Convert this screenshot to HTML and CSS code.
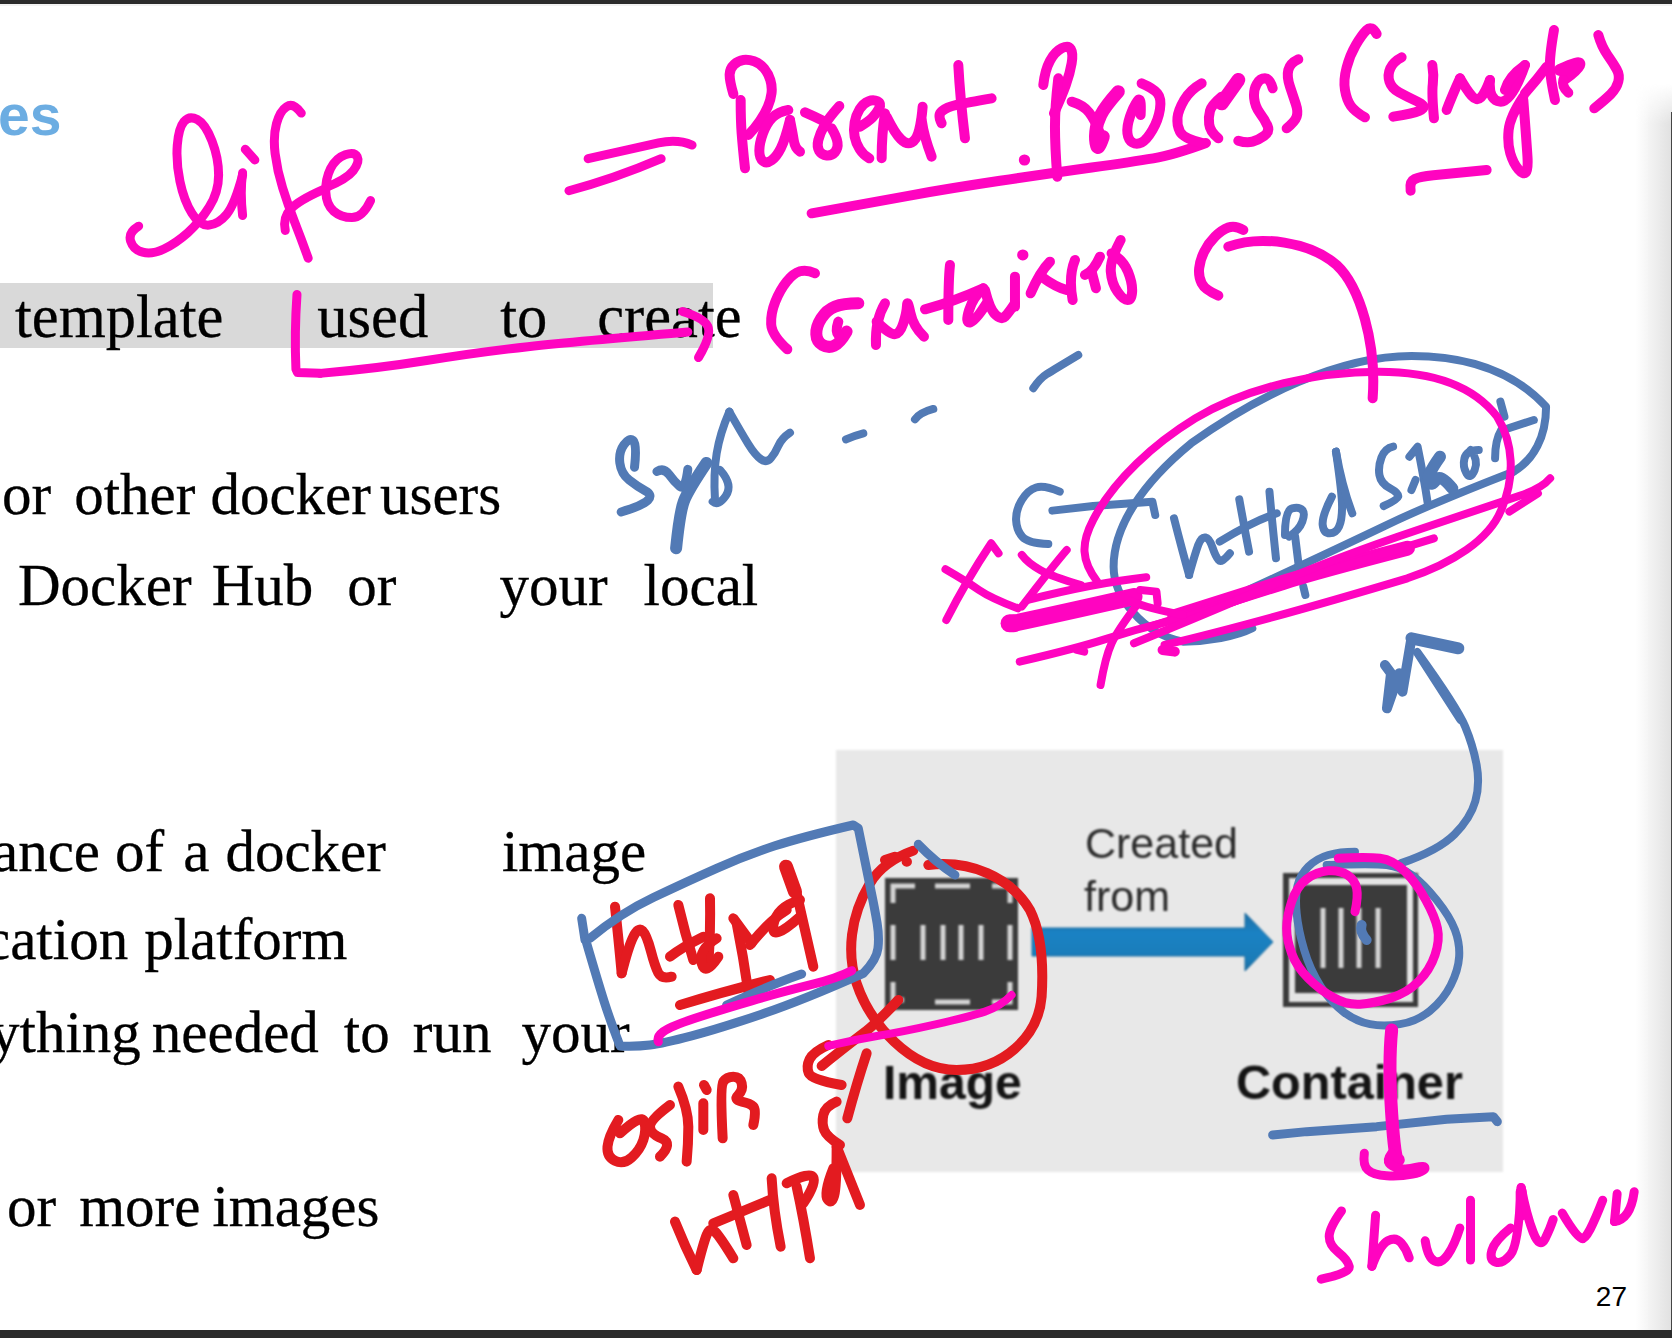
FILE: index.html
```html
<!DOCTYPE html>
<html lang="en">
<head>
<meta charset="utf-8">
<title>Slide 27</title>
<link rel="stylesheet" href="styles.css">
</head>
<body>
<div class="page">
  <div class="top-bar"></div>
  <main class="slide">
    <section class="copy">
      <h1 class="heading">es</h1>
      <p class="line band l1"><span class="s15">template</span><span class="s94">used</span><span class="s72">to</span><span class="s50">create</span></p>
      <p class="line l2"><span class="s2">or</span><span class="s23">other</span><span class="s15">docker</span><span class="s9">users</span></p>
      <p class="line l3"><span class="s18">Docker</span><span class="s20">Hub</span><span class="s34">or</span><span class="s103">your</span><span class="s36">local</span></p>
      <p class="line l4"><span class="sn8">ance</span><span class="s15">of</span><span class="s19">a</span><span class="s16">docker</span><span class="s116">image</span></p>
      <p class="line l5"><span class="sn16">cation</span><span class="s16">platform</span></p>
      <p class="line l6"><span class="sn10">ything</span><span class="s11">needed</span><span class="s25">to</span><span class="s23">run</span><span class="s30">your</span></p>
      <p class="line l7"><span class="s7">or</span><span class="s23">more</span><span class="s12">images</span></p>
    </section>
    <aside class="side">
      <svg class="figure" viewBox="0 0 667 422" width="667" height="422" role="img" aria-label="Container created from image">
        <defs>
          <linearGradient id="arrowFill" x1="0" y1="0" x2="0" y2="1">
            <stop offset="0" stop-color="#1d6ea5"/>
            <stop offset=".35" stop-color="#1a82c4"/>
            <stop offset=".8" stop-color="#1a7cb8"/>
            <stop offset="1" stop-color="#1e6b9e"/>
          </linearGradient>
        </defs>
        <rect width="667" height="422" fill="#e8e8e8"/>
        <text class="cap" x="249" y="108">Created</text>
        <text class="cap" x="248" y="161">from</text>
        <text class="label" x="47" y="349">Image</text>
        <text class="label wide" x="400" y="349">Container</text>
        <rect x="49" y="128" width="133" height="132" fill="#3b3b3b"/>
        <g class="light">
          <path d="M57 153V136H79M99 136H134M156 136H174V153M57 175V210M174 175V210M57 232V250H68M99 252H134M156 252H174V232"/>
          <path d="M87 175V210M107 175V210M125 175V210M145 175V210"/>
        </g>
        <rect x="447" y="123" width="135" height="134" fill="#3b3b3b"/>
        <rect x="453" y="128" width="124" height="124" fill="#e4e4e4"/>
        <rect x="459" y="135" width="112" height="108" fill="#3b3b3b"/>
        <g class="light">
          <path d="M487 158V218M505 158V218M523 158V218M542 158V218"/>
        </g>
        <path class="arrow" fill="url(#arrowFill)" d="M196 178H409V163L437 192L409 221V206H196Z"/>
      </svg>
      <div class="page-number">27</div>
    </aside>
  </main>
  <div class="bottom-bar"></div>

  <svg class="ink" viewBox="0 0 1672 1338" width="1672" height="1338" aria-hidden="true">
    <!-- red -->
    <g class="red w10" transform="translate(570,810) scale(.3333)">
      <path d="M135 290Q145 380 155 490"/>
      <path d="M155 490Q175 410 190 380T217.5 362.5T242.5 422.5T265 489T305 500"/>
      <path d="M325 285Q345 370 370 450"/>
      <path d="M300 440Q330 415 400 380"/>
      <path d="M420 265Q422 360 415 465"/>
      <path d="M440 385Q385 420 395 460T445 440"/>
      <path d="M500 340Q520 440 535 545"/>
      <path d="M490 325L545 400"/>
      <path d="M540 405Q600 330 650 300"/>
      <path d="M690 270Q620 290 610 345T690 320"/>
      <path d="M680 250Q700 340 730 470"/>
      <path class="w14" d="M648 170L675 245"/>
      <path d="M330 585Q460 545 600 510"/>
      <path d="M1075 165C1200 150 1320 200 1380 300C1420 380 1420 480 1415 560C1405 680 1300 780 1160 780C1020 780 900 640 860 520C830 430 840 320 900 220C930 170 980 140 1030 122"/>
      <path d="M945 150L975 140M1010 155H1011"/>
      <path d="M985 570Q920 640 880 670T755 768"/>
      <path d="M775 705Q730 725 719 747.5T716.5 790T815 825"/>
      <path d="M890 730Q860 820 832 925"/>
      <path d="M800 875Q765 890 760 915T762.5 960T810 1005"/>
      <path d="M145 930Q115 980 112.5 1010T135 1052.5T185 1042.5T220 990T222.5 935T150 970"/>
      <path d="M300 885Q240 930 240 950T275 985T270 1040"/>
      <path d="M325 830Q355 900 355 950T350 1055"/>
      <path d="M402 825L410 840M400 880L400 960"/>
      <path d="M458 985Q450 830 460 815T490 800T515 820T505 855T515 875T550 890T550 945"/>
      <path d="M315 1235Q345 1310 380 1380"/>
      <path d="M380 1380Q400 1300 410 1275T435 1265T490 1345"/>
      <path d="M490 1155Q510 1230 530 1305"/>
      <path d="M430 1240L600 1170"/>
      <path d="M605 1105Q610 1200 632 1310"/>
      <path d="M680 1130Q700 1220 720 1345"/>
      <path d="M650 1120Q720 1085 730 1102.5T700 1180"/>
      <path d="M790 1075Q760 1150 772.5 1167.5T792.5 1157.5T800 1010"/>
      <path d="M800 1010L870 1185"/>
    </g>
    <!-- blue -->
    <g class="blue w8" transform="translate(700,20) scale(.3333)">
      <path d="M1000 1105Q1020 1075 1040 1062.5T1135 1005"/>
      <path d="M645 1198Q660 1178 700 1167"/>
      <path d="M438 1258Q460 1248 490 1240"/>
      <path d="M45 1440Q40 1360 50 1300T88 1175"/>
      <path d="M88 1175Q125 1240 145 1272.5T182.5 1317.5T212.5 1315T235 1277.5T270 1238"/>
      <path d="M60 1350Q100 1395 77.5 1427.5T38 1445"/>
    </g>
    <g class="blue w9" transform="scale(.5332,.4267)">
      <path d="M1190 1095Q1195 1040 1187.5 1032.5T1170 1042.5T1162.5 1085T1180 1125T1210 1150T1215 1172.5T1165 1200"/>
      <path d="M1232 1105Q1245 1095 1255 1112.5T1275 1140T1290 1100"/>
      <path class="w12" d="M1325 1085Q1290 1150 1282.5 1175T1268 1285"/>
    </g>
    <g class="blue w8" transform="translate(930,340) scale(.408,.3333)">
      <path d="M1430 395C1480 360 1510 290 1510 200C1450 120 1350 48 1180 48C1000 48 800 170 640 310C520 430 450 560 450 680C450 770 520 880 620 905C680 905 750 890 790 865"/>
      <path d="M1430 395Q1230 490 1115 557.5T780 750"/>
      <path d="M318 455Q280 435 260 442.5T225 480T211 540T226 590T290 612"/>
      <path d="M300 512L400 498 545 485 552 525"/>
      <path d="M598 535Q620 640 635 705"/>
      <path d="M635 705Q650 640 657.5 615T675 592.5T692.5 622.5T707.5 660T735 640"/>
      <path d="M758 478Q770 560 782 635"/>
      <path d="M832 455Q838 540 848 655"/>
      <path d="M710 605Q790 545 850 520"/>
      <path d="M870 585Q870 510 887.5 505T912.5 510T912.5 545T880 590"/>
      <path d="M895 590L905 690"/>
      <path d="M985 470Q960 530 962.5 555T980 580T1002.5 560T1010 500T995 335"/>
      <path d="M995 335Q1010 440 1035 520"/>
      <path d="M1135 320Q1115 325 1106.5 352.5T1101.5 405T1127.5 445T1147.5 470T1112 498"/>
      <path d="M1175 350L1195 320Q1210 410 1220 490"/>
      <path class="w12" d="M1250 350Q1215 410 1222.5 425T1240 420T1280 445"/>
      <path d="M1190 420L1180 450"/>
      <path d="M1345 330Q1315 330 1310 355T1315 400T1335 390T1325 330"/>
      <path d="M1385 355Q1385 300 1400 270"/>
      <path d="M1405 270L1480 240"/>
      <path d="M1398 185L1408 230"/>
      <path d="M915 740L920 765"/>
      <path class="w10" d="M1115 975L1130 1000 1120 1105 1150 1000 1158 1055 1180 895"/>
      <path class="w12" d="M1180 895L1295 925"/>
      <path d="M1195 940L1300 1140"/>
    </g>
    <g class="blue w8" transform="translate(836,669) scale(.5332,.4267)">
      <path d="M1090 -40Q1165 90 1180 135T1201.5 225T1199 310T1160 387.5T1060 455"/>
    </g>
    <g class="blue w8" transform="translate(1260,830) scale(.3333)">
      <path d="M285 65Q240 65 205 75T145 110T112.5 167.5T110 250T132.5 360T182.5 470T252.5 547.5T330 582.5T420 582.5T510 542.5T572.5 465T597.5 380T585 300T530 210T455 135T380 105T200 105"/>
      <path class="w10" d="M305 285Q298 305 320 330"/>
      <path class="w9" d="M38 915L140 905 350 890 560 868 700 860L712 875"/>
    </g>
    <g class="blue w9" transform="translate(570,810) scale(.3333)">
      <path d="M35 325L45 390"/>
      <path d="M60 385Q150 310 250 262.5T440 175T615 107.5T850 45L865 55Q890 180 902.5 240T921.5 340T924 415T880 490Q700 570 575 612.5T365 677.5T240 705T150 708Q120 630 102.5 575T50 400"/>
      <path d="M470 585Q600 525 695 492"/>
      <path d="M1045 103Q1095 155 1155 195"/>
    </g>
    <!-- pink -->
    <g class="pink w9" transform="scale(.5332,.4267)">
      <path d="M260 530Q240 545 245 565T267.5 591T307.5 583.5T352.5 545T392.5 485T410 410T397.5 330T370 280T345 285T332.5 340T337.5 425T360 500T392.5 527.5T425 502.5T455 410"/>
      <path d="M455 405Q450 450 455 505"/>
      <path d="M460 350L478 375"/>
      <path d="M565 265Q550 240 537.5 250T518.5 290T516 360T530 440T552.5 520T578 605"/>
      <path d="M605 445Q560 470 545 490T535 540"/>
      <path d="M610 440Q650 420 662.5 400T670 367.5T647.5 362.5T620 395T611 450T626 495T660 510T695 470"/>
      <path d="M1103 372Q1200 345 1235 335T1298 340"/>
      <path d="M1067 447Q1150 420 1240 372"/>
      <path d="M557 690Q552 780 555 865L558 873 600 875"/>
      <path d="M600 875Q700 865 800 845T990 812.5T1290 778"/>
      <path d="M1280 730Q1320 745 1327.5 765T1310 838"/>
    </g>
    <g class="pink w10" transform="translate(700,20) scale(.3333)">
      <path d="M100 222Q88 180 89 162.5T102.5 133.5T130 120T162.5 124T192.5 145T211 180T214.5 220T203.5 260T180 302.5T145 345"/>
      <path d="M122 240Q122 300 125 340T135 445"/>
      <path d="M265 270Q235 275 217.5 292.5T189 340T178 392.5T189 423.5T215 421T242.5 385T270 300"/>
      <path d="M270 300Q278 340 281.5 362.5T300 395"/>
      <path d="M315 277Q345 290 375 305"/>
      <path d="M418 258Q385 295 372.5 317.5T355 360T357.5 392.5T380 406.5T405 396.5T412.5 367.5T395 325"/>
      <path d="M480 320Q505 305 517.5 292.5T537.5 265T532.5 244T505 244T479 267.5T464 307.5T464 350T479 387.5T508 415"/>
      <path d="M555 280Q545 340 545 415"/>
      <path d="M560 290Q585 340 602.5 357.5T635 367.5T657.5 330T668 260"/>
      <path d="M665 300Q672 350 695 410"/>
      <path d="M775 135Q780 230 795 355"/>
      <path d="M725 310Q712 285 726 273.5T770 255T875 235"/>
      <path d="M1030 195Q1035 150 1050 122.5T1085 85T1112.5 87.5T1115 130T1097.5 195T1062 280"/>
      <path d="M1075 175Q1065 260 1065 320T1072 470"/>
      <path d="M1115 245Q1150 255 1167.5 277.5T1200 340"/>
      <path class="w13" d="M1255 215Q1215 260 1202.5 285T1187.5 335T1190 377.5T1210 350"/>
      <path class="w11" d="M973 420H974"/>
      <path d="M1325 190Q1360 205 1372.5 220T1380 267.5T1357.5 330T1325 367.5T1297.5 367.5T1282.5 340T1290 290T1312.5 242.5T1322 285"/>
      <path d="M335 580Q500 550 625 527.5T900 482.5T1175 442.5T1360 415T1518 369"/>
      <path d="M345 760Q320 748 300 754T260 785T226 845T213.5 912.5T262 988"/>
      <path class="w12" d="M475 850Q430 850 405 860T364 895T349 942.5T367.5 975T402.5 977.5T440 935"/>
      <path d="M415 905Q405 935 415 945"/>
      <path d="M528 975Q525 900 555 850"/>
      <path d="M530 905Q570 945 585 942.5T610 910T621 857.5T631 877.5T672 950"/>
      <path d="M750 735Q745 780 745 900"/>
      <path d="M675 868Q760 845 850 805"/>
      <path d="M850 805Q820 830 807.5 870T810 907.5T860 850"/>
      <path d="M855 810Q870 870 887.5 885T915 890T945 850"/>
      <path d="M945 770L945 860"/>
      <path class="w11" d="M968 705H969"/>
      <path d="M1050 725Q1020 755 992 820"/>
      <path d="M1025 770Q1065 800 1100 810"/>
      <path d="M1125 720Q1105 770 1118 840"/>
      <path d="M1155 765Q1180 755 1200 710"/>
      <path d="M1175 755L1188 805"/>
      <path d="M1262 660Q1230 720 1232.5 755T1252.5 815T1282.5 840T1296.5 815T1284 755T1235 700"/>
    </g>
    <g class="pink w10" transform="translate(1180,0) scale(.3333)">
      <path d="M65 250Q30 270 12.5 300T-7.5 352.5T0 395T70 430"/>
      <path class="w14" d="M175 240L125 310"/>
      <path d="M125 290Q95 315 90 332.5T87.5 372.5T115 415"/>
      <path d="M278 265Q270 235 255 235T230 252.5T222.5 295T240 340T262.5 377.5T252.5 407.5T217.5 425T175 422"/>
      <path d="M355 178Q330 190 325 210T330 260T347.5 312.5T350 350T320 385"/>
      <path d="M590 102Q575 75 560 90T527.5 135T500 202.5T495 270T512.5 317.5T555 352"/>
      <path d="M665 172Q640 185 631 205T628.5 245T657.5 277.5T702.5 300T730 317.5T717.5 332.5T640 350"/>
      <path d="M757 195Q762 225 758.5 252.5T762 355"/>
      <path d="M800 330Q815 290 840 235"/>
      <path d="M840 235Q860 270 875 287.5T902.5 292.5T930 240"/>
      <path d="M930 240Q925 300 960 305T1035 195"/>
      <path d="M1035 195Q985 230 975 270"/>
      <path d="M1030 290Q990 350 986 390T991 460T1015 507.5T1037.5 517.5T1042.5 470T1030 300"/>
      <path d="M1122 90Q1108 170 1110 205T1125 300"/>
      <path d="M1100 200Q1070 240 1035 280"/>
      <path class="w12" d="M1140 210Q1205 180 1197.5 195T1155 235"/>
      <path d="M1150 240Q1145 260 1165 278"/>
      <path d="M1255 105Q1265 140 1282.5 165T1310 207.5T1315 245T1292.5 282.5T1243 325"/>
      <path d="M692 572Q688 545 704 537.5T760 526T920 510"/>
      <path d="M190 690Q165 675 145 682.5T105 710T72.5 755T57.5 805T65 850T115 887"/>
      <path d="M145 740C240 705 390 725 470 795C540 860 590 1030 578 1195"/>
    </g>
    <g class="pink w8" transform="translate(930,340) scale(.408,.3333)">
      <path d="M410 725C370 660 370 610 400 540C450 420 550 310 650 235C780 140 950 95 1100 95C1250 95 1340 150 1390 230C1430 310 1435 410 1400 510C1370 600 1280 670 1170 715C1020 770 800 850 575 915"/>
      <path class="w17" d="M205 850Q320 820 500 770"/>
      <path class="w18" d="M195 850L205 850"/>
      <path class="w15" d="M600 830Q780 760 865 727.5T1170 625"/>
      <path d="M540 860L1000 680"/>
      <path d="M220 965Q360 925 430 897.5T575 847.5T775 772.5T1235 595"/>
      <path d="M500 910Q700 810 850 730T1195 570T1445 467.5T1520 415"/>
      <path d="M1420 515L1490 460"/>
      <path class="w10" d="M570 930L600 935"/>
      <path d="M38 688Q90 725 120 750T215 805"/>
      <path d="M40 840Q90 720 150 610L168 640"/>
      <path d="M225 645Q240 670 270 690T370 735"/>
      <path d="M335 630Q300 680 225 800"/>
      <path d="M240 780Q400 730 530 712"/>
      <path d="M515 750L555 755 558 790"/>
      <path d="M418 1035Q430 950 445 910T510 790"/>
      <path d="M360 930L378 935"/>
      <path d="M470 770Q510 800 620 825"/>
    </g>
    <g class="pink w9" transform="translate(570,810) scale(.3333)">
      <path d="M265 695Q260 680 280 665T375 625T545 572.5T720 525T845 482"/>
      <path class="w8" d="M775 708Q850 690 925 677.5T1100 642.5T1245 605T1325 555"/>
    </g>
    <g class="pink w9" transform="translate(1260,830) scale(.3333)">
      <path d="M235 85Q320 80 360 85T435 125T497.5 210T532.5 295T525 375T475 455T390 505T300 522.5T220 502.5T145 445T95 370T80 295T95 215T140 147.5T205 122.5T262.5 135T290 175T285 245"/>
      <path class="w13" d="M395 600Q385 700 395 850T415 990"/>
      <path d="M313 970Q308 1005 324 1020T380 1037.5T457.5 1032.5T495 1015T467.5 1012.5T417.5 1015T387.5 1000T395 970"/>
    </g>
    <g class="pink w9" transform="translate(836,669) scale(.5332,.4267)">
      <path d="M948 1270Q925 1310 925 1330T942.5 1367.5T962.5 1400T910 1430"/>
      <path d="M1012 1280L1005 1400"/>
      <path d="M1005 1400Q1020 1350 1035 1340T1060 1345T1075 1380"/>
      <path d="M1105 1340Q1110 1380 1122.5 1387.5T1147.5 1372.5T1170 1310"/>
      <path d="M1190 1245L1190 1385"/>
      <path d="M1265 1310Q1235 1340 1230 1362.5T1237.5 1390T1265 1372.5T1285 1215"/>
      <path class="w11" d="M1285 1225L1285 1280"/>
      <path d="M1285 1215Q1295 1280 1307.5 1320T1330 1335T1345 1290"/>
      <path d="M1362 1275Q1390 1335 1400 1335T1438 1245"/>
      <path d="M1465 1230L1460 1295"/>
      <path d="M1460 1295Q1490 1290 1497 1225"/>
    </g>
  </svg>
</div>
</body>
</html>
```
FILE: styles.css
```css
* { box-sizing: border-box; }
html, body { margin: 0; padding: 0; background: #fff; }
.page { position: relative; width: 1672px; height: 1338px; overflow: hidden; display: flex; flex-direction: column; background: #fff; }
.top-bar { height: 6px; flex: none; background: #f2f2f2; border-top: 4px solid #2b2b2b; }
.bottom-bar { height: 8px; flex: none; background: #2b2b2b; }
.slide { position: relative; flex: 1; display: grid; grid-template-columns: 836px 836px; background: #fff; }
.slide::before { content: ""; position: absolute; z-index: 1; right: 0; top: 106px; bottom: 0; width: 1px; background: #444; }
.slide::after { content: ""; position: absolute; right: 0; top: 78px; bottom: 0; width: 36px; background: linear-gradient(to right, rgba(225,225,225,0), #e0e0e0); -webkit-mask-image: linear-gradient(to bottom, transparent, #000 40px); mask-image: linear-gradient(to bottom, transparent, #000 40px); }
.copy { font-family: "Liberation Serif", "Times New Roman", serif; font-size: 59px; color: #000; -webkit-text-stroke: .3px #000; }
.heading { margin: 79px 0 0 -2px; font: bold 57px/60px "Liberation Sans", Arial, sans-serif; color: #6cade2; -webkit-text-stroke: 0; }
.line { display: flex; margin: 0; height: 60px; line-height: 60px; white-space: pre; position: relative; }
.band { width: 713px; height: 65px; line-height: 67px; font-size: 60.5px; background: #d9d9d9; margin-top: 138px; }
.l2 { margin-top: 116px; }
.l3 { margin-top: 31px; }
.l4 { margin-top: 206px; }
.l5 { margin-top: 28px; }
.l6 { margin-top: 33px; }
.l7 { margin-top: 114px; }
.sn16 { margin-left: -16px; }
.sn10 { margin-left: -10px; }
.sn8 { margin-left: -8px; }
.s2 { margin-left: 2px; }
.s7 { margin-left: 7px; }
.s9 { margin-left: 9px; }
.s11 { margin-left: 11px; }
.s12 { margin-left: 12px; }
.s15 { margin-left: 15px; }
.s16 { margin-left: 16px; }
.s18 { margin-left: 18px; }
.s19 { margin-left: 19px; }
.s20 { margin-left: 20px; }
.s23 { margin-left: 23px; }
.s25 { margin-left: 25px; }
.s30 { margin-left: 30px; }
.s34 { margin-left: 34px; }
.s36 { margin-left: 36px; }
.s50 { margin-left: 50px; }
.s72 { margin-left: 72px; }
.s94 { margin-left: 94px; }
.s103 { margin-left: 103px; }
.s116 { margin-left: 116px; }
.side { padding-top: 744px; }
.figure { display: block; filter: blur(.8px); }
.cap { font: 43px "Liberation Sans", Arial, sans-serif; fill: #2b2b2b; }
.label { font: bold 48px "Liberation Sans", Arial, sans-serif; fill: #141414; }
.wide { font-size: 48.6px; }
.light path { fill: none; stroke: #d4d4d4; stroke-width: 5; }
.arrow { stroke: #1d6c9f; stroke-width: 1; }
.page-number { margin-top: 111px; padding-right: 45px; text-align: right; font: 28px/28px "Liberation Sans", Arial, sans-serif; color: #000; }
.ink { position: absolute; z-index: 2; left: 0; top: 0; pointer-events: none; fill: none; stroke-linecap: round; stroke-linejoin: round; }
.ink path { vector-effect: non-scaling-stroke; }
.pink { stroke: #ff04c0; }
.blue { stroke: #527ab5; }
.red { stroke: #e31b20; }
.w8 { stroke-width: 8px; }
.w9 { stroke-width: 9px; }
.w10 { stroke-width: 10px; }
.w11 { stroke-width: 11px; }
.w12 { stroke-width: 12px; }
.w13 { stroke-width: 13px; }
.w14 { stroke-width: 14px; }
.w15 { stroke-width: 15px; }
.w17 { stroke-width: 17px; }
.w18 { stroke-width: 18px; }
```
